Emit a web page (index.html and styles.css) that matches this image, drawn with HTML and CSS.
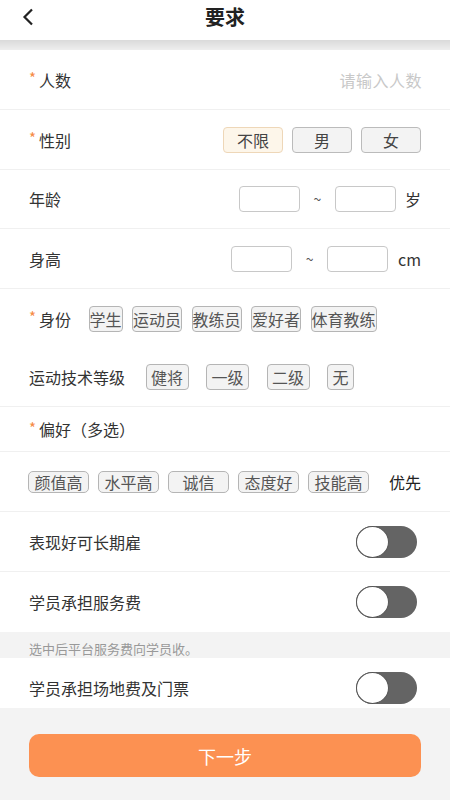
FILE: index.html
```html
<!DOCTYPE html>
<html lang="zh">
<head>
<meta charset="utf-8">
<link rel="stylesheet" href="styles.css">
</head>
<body>
<div class="page">
  <header class="header">
    <svg class="back" width="14" height="18" viewBox="0 0 14 18"><path d="M11 1.5 L3.5 9 L11 16.5" fill="none" stroke="#222" stroke-width="2.2"/></svg>
    <h1 class="title">要求</h1>
  </header>
  <div class="shade"></div>
  <div class="form">
    <div class="row">
      <span class="label"><i class="star">*</i>人数</span>
      <span class="placeholder">请输入人数</span>
    </div>
    <div class="row">
      <span class="label"><i class="star">*</i>性别</span>
      <div class="seg">
        <span class="opt active">不限</span>
        <span class="opt">男</span>
        <span class="opt">女</span>
      </div>
    </div>
    <div class="row h59">
      <span class="label">年龄</span>
      <div class="range">
        <span class="box"></span><span class="tilde">~</span><span class="box"></span><span class="unit">岁</span>
      </div>
    </div>
    <div class="row">
      <span class="label">身高</span>
      <div class="range">
        <span class="box"></span><span class="tilde">~</span><span class="box"></span><span class="unit cm">cm</span>
      </div>
    </div>
    <div class="row h59 nosep">
      <div class="chips c1">
        <span class="label"><i class="star">*</i>身份</span>
        <span class="chip tight">学生</span>
        <span class="chip tight">运动员</span>
        <span class="chip tight">教练员</span>
        <span class="chip tight">爱好者</span>
        <span class="chip tight">体育教练</span>
      </div>
    </div>
    <div class="row h59">
      <div class="chips c2">
        <span class="label">运动技术等级</span>
        <span class="chip mid">健将</span>
        <span class="chip mid">一级</span>
        <span class="chip mid">二级</span>
        <span class="chip mid">无</span>
      </div>
    </div>
    <div class="row short">
      <span class="label"><i class="star">*</i>偏好（多选）</span>
    </div>
    <div class="row">
      <div class="chips c3">
        <span class="chip pref">颜值高</span>
        <span class="chip pref">水平高</span>
        <span class="chip pref">诚信</span>
        <span class="chip pref">态度好</span>
        <span class="chip pref">技能高</span>
      </div>
      <span class="plain">优先</span>
    </div>
    <div class="row">
      <span class="label">表现好可长期雇</span>
      <span class="toggle"><span class="knob"></span></span>
    </div>
    <div class="row nosep">
      <span class="label">学员承担服务费</span>
      <span class="toggle"><span class="knob"></span></span>
    </div>
    <div class="note">选中后平台服务费向学员收。</div>
    <div class="row last nosep">
      <span class="label">学员承担场地费及门票</span>
      <span class="toggle"><span class="knob"></span></span>
    </div>
  </div>
  <div class="footer">
    <button class="next">下一步</button>
  </div>
</div>
</body>
</html>
```
FILE: styles.css
```css
* { box-sizing: border-box; margin: 0; padding: 0; }
html, body { background: #f3f3f3; }
body {
  font-family: "Noto Sans CJK SC", "Noto Sans", sans-serif;
  color: #333;
  font-size: 16px;
}
.page { width: 450px; min-height: 800px; background: #f3f3f3; }
.header {
  height: 40px;
  background: #fff;
  display: flex;
  align-items: center;
  justify-content: center;
  position: relative;
}
.back { position: absolute; left: 21px; top: 8px; }
.title { font-size: 20px; font-weight: bold; color: #222; line-height: 1; margin-top: -6px; }
.shade {
  height: 10px;
  background: linear-gradient(#dadada, #eeeeee);
}
.form { background: #fff; }
.row {
  height: 60px;
  padding: 0 29px 0 29px;
  display: flex;
  align-items: center;
  justify-content: space-between;
  border-bottom: 1px solid #f0f0f0;
}
.row.h59 { height: 59px; }
.row.nosep { border-bottom: none; }
.row.short { height: 45px; }
.row.last { height: 50px; padding-top: 10px; }
.label { line-height: 1; white-space: nowrap; display: flex; align-items: center; }
.star {
  font-style: normal; color: #f68a45; font-size: 15px;
  width: 10px; margin-top: -4px;
}
.placeholder { color: #c8c8c8; letter-spacing: 0.5px; margin-right: -1px; }
.seg { display: flex; gap: 9px; }
.opt {
  width: 60px; height: 26px;
  border: 1px solid #bbb;
  border-radius: 4px;
  background: #f3f3f3;
  display: flex; align-items: center; justify-content: center;
  font-size: 16px; color: #444;
}
.opt.active { background: #fdf6ea; border-color: #eed7b8; }
.range { display: flex; align-items: center; }
.box {
  width: 61px; height: 26px;
  border: 1px solid #c8c8c8;
  border-radius: 4px;
}
.tilde { width: 35px; text-align: center; font-size: 14px; color: #555; }
.unit { margin-left: 9px; }
.unit.cm { margin-left: 10px; }
.chips { display: flex; align-items: center; }
.chip {
  height: 26px;
  border: 1px solid #b5b5b5;
  border-radius: 4px;
  background: #f3f3f3;
  display: flex; align-items: center; justify-content: center;
  font-size: 16px; color: #555;
  line-height: 1;
  white-space: nowrap;
}
.c1 { gap: 9.5px; }
.c1 .label { margin-right: 8px; }
.c2 { gap: 17.5px; }
.c2 .label { margin-right: 3px; }
.chip.mid { padding: 0 4.5px; }
.c3 { gap: 9px; margin-left: -1px; }
.chip.pref { width: 61px; height: 22px; border-radius: 5px; }
.plain { color: #222; }
.toggle {
  width: 61px; height: 32px;
  margin-right: 4px;
  border-radius: 16px;
  background: #646464;
  display: flex; align-items: center;
  position: relative;
}
.knob {
  width: 33px; height: 32px;
  border-radius: 50%;
  background: #fff;
  border: 1px solid #555;
}
.note {
  height: 26px;
  background: #f3f3f3;
  color: #999;
  font-size: 13px;
  padding: 8px 29px 0;
  line-height: 18px;
}
.footer { padding: 26px 29px 0; }
.next {
  width: 392px; height: 43px;
  border: none;
  border-radius: 10px;
  background: #fc9152;
  color: #fff;
  font-family: inherit;
  font-size: 18px;
}
```
